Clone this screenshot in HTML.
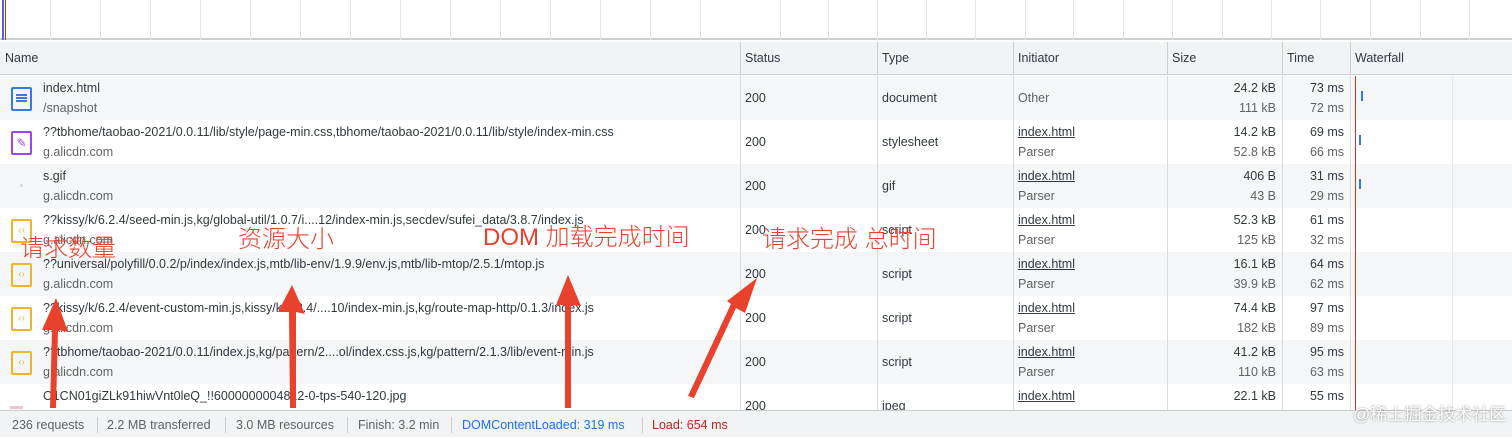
<!DOCTYPE html>
<html><head><meta charset="utf-8"><style>
*{box-sizing:border-box;margin:0;padding:0}
body{width:1512px;height:437px;overflow:hidden;background:#fff;font-family:"Liberation Sans","Noto Sans CJK SC",sans-serif;font-size:12.5px;color:#303942;position:relative}
.ov{position:absolute;top:0;left:0;width:1512px;height:40px;border-bottom:2px solid #cbcdd1}
.ov i{position:absolute;top:0;height:40px;border-left:1px solid #e4e4e4}
.hdr{position:absolute;top:42px;left:0;width:1512px;height:33px;background:#f1f3f4;border-bottom:1px solid #cbcdd1}
.c{position:absolute;top:0;height:100%;border-left:1px solid #cbcdd1;padding-left:4px}
.hdr .c{line-height:32px;color:#303942}
.row{position:absolute;left:0;width:1512px;height:44px}
.row .c{border-left:1px solid #d8dadd}
.g{background:#f5f6f7}
.l1{position:absolute;top:5px}
.l2{position:absolute;top:25px;color:#5f6368}
.mid{position:absolute;top:15px}
.r{text-align:right;padding-right:6px}
.r .l1,.r .l2{right:6px}
u{text-decoration:underline}
.ic{position:absolute;left:11px;top:11px;width:21px;height:24px;border:2px solid;border-radius:2px}
.ft{position:absolute;top:410px;left:0;width:1512px;height:27px;background:#f1f3f4;border-top:1px solid #cbcdd1;line-height:28px;color:#5f6368}
.ft span{position:absolute;top:0}
.ft b{position:absolute;top:6px;height:16px;border-left:1px solid #cbcdd1}
.ann{position:absolute;color:#e8412c;font-size:24px;white-space:nowrap;font-family:"Liberation Sans","Noto Sans CJK SC",sans-serif;font-weight:300}
</style></head><body>
<div class="ov">
<i style="left:2px;border-left:2px solid #4b6bd6"></i><i style="left:5px;border-left:1px solid #b03a2e"></i>
<i style="left:50px"></i><i style="left:100px"></i><i style="left:150px"></i><i style="left:200px"></i><i style="left:250px"></i><i style="left:300px"></i><i style="left:350px"></i><i style="left:400px"></i><i style="left:450px"></i><i style="left:500px"></i><i style="left:550px"></i><i style="left:600px"></i><i style="left:650px"></i><i style="left:700px"></i><i style="left:780px"></i><i style="left:828px"></i><i style="left:877px"></i><i style="left:926px"></i><i style="left:975px"></i><i style="left:1025px"></i><i style="left:1073px"></i><i style="left:1123px"></i><i style="left:1172px"></i><i style="left:1222px"></i><i style="left:1271px"></i><i style="left:1320px"></i><i style="left:1370px"></i><i style="left:1420px"></i><i style="left:1469px"></i>
</div>
<div class="hdr">
<div class="c" style="left:0;border:0;padding-left:5px">Name</div>
<div class="c" style="left:740px">Status</div>
<div class="c" style="left:877px">Type</div>
<div class="c" style="left:1013px">Initiator</div>
<div class="c" style="left:1167px">Size</div>
<div class="c" style="left:1282px">Time</div>
<div class="c" style="left:1350px">Waterfall</div>
</div>

<div class="row g" style="top:76px">
<div class="ic" style="border-color:#3b78e7"><div style="margin:5px 3px;border-top:2px solid #3b78e7;border-bottom:2px solid #3b78e7;height:8px;position:relative"><div style="position:absolute;top:1px;left:0;right:0;border-top:2px solid #3b78e7"></div></div></div>
<div class="l1" style="left:43px">index.html</div><div class="l2" style="left:43px">/snapshot</div>
<div class="c" style="left:740px"><span class="mid">200</span></div>
<div class="c" style="left:877px"><span class="mid">document</span></div>
<div class="c" style="left:1013px"><span class="mid" style="color:#5f6368">Other</span></div>
<div class="c r" style="left:1167px;width:115px"><span class="l1">24.2 kB</span><span class="l2">111 kB</span></div>
<div class="c r" style="left:1282px;width:68px"><span class="l1">73 ms</span><span class="l2">72 ms</span></div>
<div class="c" style="left:1350px"></div>
</div>
<div class="row" style="top:120px">
<div class="ic" style="border-color:#a142f4;color:#a142f4;font-size:12px;line-height:20px;text-align:center">✎</div>
<div class="l1" style="left:43px">??tbhome/taobao-2021/0.0.11/lib/style/page-min.css,tbhome/taobao-2021/0.0.11/lib/style/index-min.css</div><div class="l2" style="left:43px">g.alicdn.com</div>
<div class="c" style="left:740px"><span class="mid">200</span></div>
<div class="c" style="left:877px"><span class="mid">stylesheet</span></div>
<div class="c" style="left:1013px"><u class="l1">index.html</u><span class="l2">Parser</span></div>
<div class="c r" style="left:1167px;width:115px"><span class="l1">14.2 kB</span><span class="l2">52.8 kB</span></div>
<div class="c r" style="left:1282px;width:68px"><span class="l1">69 ms</span><span class="l2">66 ms</span></div>
<div class="c" style="left:1350px"></div>
</div>
<div class="row g" style="top:164px">
<div style="position:absolute;left:20px;top:20px;width:3px;height:3px;background:#ddd"></div>
<div class="l1" style="left:43px">s.gif</div><div class="l2" style="left:43px">g.alicdn.com</div>
<div class="c" style="left:740px"><span class="mid">200</span></div>
<div class="c" style="left:877px"><span class="mid">gif</span></div>
<div class="c" style="left:1013px"><u class="l1">index.html</u><span class="l2">Parser</span></div>
<div class="c r" style="left:1167px;width:115px"><span class="l1">406 B</span><span class="l2">43 B</span></div>
<div class="c r" style="left:1282px;width:68px"><span class="l1">31 ms</span><span class="l2">29 ms</span></div>
<div class="c" style="left:1350px"></div>
</div>
<div class="row" style="top:208px">
<div class="ic" style="border-color:#f0b429;color:#f0b429;font-size:10px;line-height:20px;text-align:center">‹›</div>
<div class="l1" style="left:43px">??kissy/k/6.2.4/seed-min.js,kg/global-util/1.0.7/i....12/index-min.js,secdev/sufei_data/3.8.7/index.js</div><div class="l2" style="left:43px">g.alicdn.com</div>
<div class="c" style="left:740px"><span class="mid">200</span></div>
<div class="c" style="left:877px"><span class="mid">script</span></div>
<div class="c" style="left:1013px"><u class="l1">index.html</u><span class="l2">Parser</span></div>
<div class="c r" style="left:1167px;width:115px"><span class="l1">52.3 kB</span><span class="l2">125 kB</span></div>
<div class="c r" style="left:1282px;width:68px"><span class="l1">61 ms</span><span class="l2">32 ms</span></div>
<div class="c" style="left:1350px"></div>
</div>
<div class="row g" style="top:252px">
<div class="ic" style="border-color:#f0b429;color:#f0b429;font-size:10px;line-height:20px;text-align:center">‹›</div>
<div class="l1" style="left:43px">??universal/polyfill/0.0.2/p/index/index.js,mtb/lib-env/1.9.9/env.js,mtb/lib-mtop/2.5.1/mtop.js</div><div class="l2" style="left:43px">g.alicdn.com</div>
<div class="c" style="left:740px"><span class="mid">200</span></div>
<div class="c" style="left:877px"><span class="mid">script</span></div>
<div class="c" style="left:1013px"><u class="l1">index.html</u><span class="l2">Parser</span></div>
<div class="c r" style="left:1167px;width:115px"><span class="l1">16.1 kB</span><span class="l2">39.9 kB</span></div>
<div class="c r" style="left:1282px;width:68px"><span class="l1">64 ms</span><span class="l2">62 ms</span></div>
<div class="c" style="left:1350px"></div>
</div>
<div class="row" style="top:296px">
<div class="ic" style="border-color:#f0b429;color:#f0b429;font-size:10px;line-height:20px;text-align:center">‹›</div>
<div class="l1" style="left:43px">??kissy/k/6.2.4/event-custom-min.js,kissy/k/6.2.4/....10/index-min.js,kg/route-map-http/0.1.3/index.js</div><div class="l2" style="left:43px">g.alicdn.com</div>
<div class="c" style="left:740px"><span class="mid">200</span></div>
<div class="c" style="left:877px"><span class="mid">script</span></div>
<div class="c" style="left:1013px"><u class="l1">index.html</u><span class="l2">Parser</span></div>
<div class="c r" style="left:1167px;width:115px"><span class="l1">74.4 kB</span><span class="l2">182 kB</span></div>
<div class="c r" style="left:1282px;width:68px"><span class="l1">97 ms</span><span class="l2">89 ms</span></div>
<div class="c" style="left:1350px"></div>
</div>
<div class="row g" style="top:340px">
<div class="ic" style="border-color:#f0b429;color:#f0b429;font-size:10px;line-height:20px;text-align:center">‹›</div>
<div class="l1" style="left:43px">??tbhome/taobao-2021/0.0.11/index.js,kg/pattern/2....ol/index.css.js,kg/pattern/2.1.3/lib/event-min.js</div><div class="l2" style="left:43px">g.alicdn.com</div>
<div class="c" style="left:740px"><span class="mid">200</span></div>
<div class="c" style="left:877px"><span class="mid">script</span></div>
<div class="c" style="left:1013px"><u class="l1">index.html</u><span class="l2">Parser</span></div>
<div class="c r" style="left:1167px;width:115px"><span class="l1">41.2 kB</span><span class="l2">110 kB</span></div>
<div class="c r" style="left:1282px;width:68px"><span class="l1">95 ms</span><span class="l2">63 ms</span></div>
<div class="c" style="left:1350px"></div>
</div>
<div class="row" style="top:384px">
<div style="position:absolute;left:10px;top:22px;width:13px;height:3px;background:#e8c8c8"></div>
<div class="l1" style="left:43px">O1CN01giZLk91hiwVnt0leQ_!!6000000004812-0-tps-540-120.jpg</div>
<div class="c" style="left:740px"><span class="mid">200</span></div>
<div class="c" style="left:877px"><span class="mid">jpeg</span></div>
<div class="c" style="left:1013px"><u class="l1">index.html</u></div>
<div class="c r" style="left:1167px;width:115px"><span class="l1">22.1 kB</span></div>
<div class="c r" style="left:1282px;width:68px"><span class="l1">55 ms</span></div>
<div class="c" style="left:1350px"></div>
</div>
<div style="position:absolute;left:1355px;top:76px;width:1px;height:334px;background:#c0392b"></div>
<div style="position:absolute;left:1452px;top:76px;width:1px;height:334px;background:#e8e8e8"></div>
<div style="position:absolute;left:1361px;top:91px;width:2px;height:10px;background:#3b78e7"></div>
<div style="position:absolute;left:1359px;top:135px;width:2px;height:10px;background:#3b78e7"></div>
<div style="position:absolute;left:1359px;top:179px;width:2px;height:10px;background:#3b78e7"></div>

<div class="ft">
<span style="left:12px">236 requests</span><b style="left:97px"></b>
<span style="left:107px">2.2 MB transferred</span><b style="left:225px"></b>
<span style="left:236px">3.0 MB resources</span><b style="left:347px"></b>
<span style="left:358px">Finish: 3.2 min</span><b style="left:451px"></b>
<span style="left:462px;color:#1a73e8">DOMContentLoaded: 319 ms</span><b style="left:642px"></b>
<span style="left:652px;color:#c5221f">Load: 654 ms</span>
</div>

<svg style="position:absolute;left:0;top:0" width="1512" height="437">
<g fill="#e8412c">
<polygon points="50,408 56,408 58,330 68,332 56,298 42,330 52,330"/>
<polygon points="290,408 296,408 296,312 305,314 292,285 278,312 289,312"/>
<polygon points="565,408 571,408 571,305 581,306 568,275 556,305 565,305"/>
<polygon points="688,396 694,398 736,308 745,313 757,278 727,301 731,304"/>
</g>
</svg>
<div class="ann" style="left:20px;top:228px">请求数量</div>
<div class="ann" style="left:238px;top:219px">资源大小</div>
<div class="ann" style="left:483px;top:217px">DOM 加载完成时间</div>
<div class="ann" style="left:762px;top:219px">请求完成 总时间</div>
<div style="position:absolute;left:1353px;top:400px;font-size:17px;color:#fff;text-shadow:0 0 2px #888">@稀土掘金技术社区</div>
</body></html>
